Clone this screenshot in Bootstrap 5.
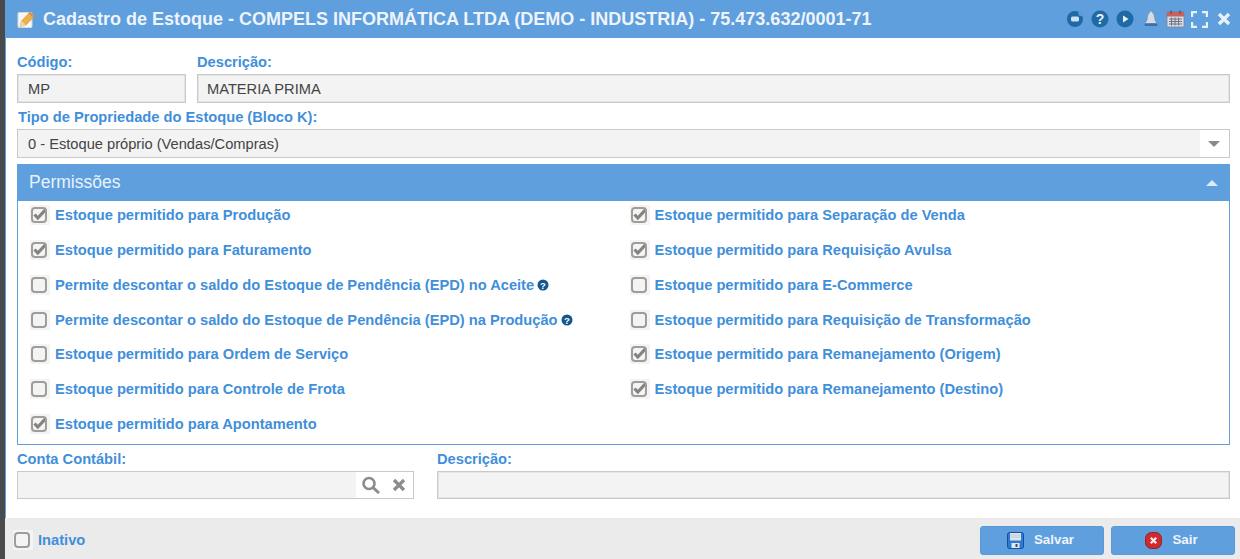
<!DOCTYPE html>
<html lang="pt-BR"><head><meta charset="utf-8"><title>Cadastro de Estoque</title>
<link href="https://cdn.jsdelivr.net/npm/bootstrap@5.3.0/dist/css/bootstrap.min.css" rel="stylesheet">
<style>
html,body{height:559px;overflow:hidden;margin:0}
body{font-family:"Liberation Sans",Arial,sans-serif;font-size:14.67px;background:#4a4a4a;color:#444}
.shell{height:559px;margin-left:5px;background:#fff;border-left:1px solid #5f9fde}
.titlebar{height:38px;background:#5f9fde;color:#eef4fb;margin-left:-1px;padding:0 9px 0 12px}
.titletext{font-size:18px;font-weight:700;margin-left:7px;white-space:nowrap}
.tools{gap:6px}
.ml1{margin-left:1px}.ml2{margin-left:2px}.ml3{margin-left:3px}
.formarea{height:480px;padding:0 10px 0 11px}
.lbl{display:block;font-weight:700;color:#3f8fdb;font-size:14.67px;line-height:16px;margin:0 0 4px}
.fld{height:29px;border:1px solid #c9c9c9;border-radius:0;background:#f3f3f3;color:#444;font-size:14.67px;padding:0 10px;box-shadow:inset 0 0 0 1px #e4e4e4;line-height:26px}
.fld:focus{background:#f3f3f3;border-color:#c9c9c9;box-shadow:inset 0 0 0 1px #e4e4e4}
.fld-d{padding-left:9px}
.top1{padding-top:16px;gap:11px}
.w-cod{width:169px}
.tipo{margin-top:6px}
.tipo .lbl{padding-left:1px}
.sel{height:29px;border:1px solid #c9c9c9;background:#fff}
.sel>span{background:#f3f3f3;width:1182px;height:100%;line-height:28px;padding-left:10px;color:#444}
.sel>i{flex:1}
.arrow-d{width:0;height:0;border-left:6px solid transparent;border-right:6px solid transparent;border-top:6px solid #8a8a8a;margin-right:9px}
.arrow-u{width:0;height:0;border-left:6px solid transparent;border-right:6px solid transparent;border-bottom:6px solid #dcebf9}
.perm{margin-top:6px;border:1px solid #5f9fde;border-top:0;height:281px}
.permhead{height:37px;background:#5f9fde;color:#e9f2fb;font-size:17.5px;margin:0 -1px;padding:0 12px 0 12px}
.permgrid{padding-left:12px}
.permcol{width:600px}
.chk{height:28px;margin-bottom:6.85px;gap:5px}
.chk label{font-weight:700;color:#3f8fdb;font-size:14.67px;white-space:nowrap}
.boxwrap{width:20px;height:20px;background:#f4f4f4;display:flex;align-items:center;padding-left:1px;flex:none}
.boxwrap .form-check-input{width:16px;height:16px;margin:0;border:2px solid #a09c98;border-radius:4px;background-color:#f4f4f4;box-shadow:none}
.boxwrap .form-check-input:checked{background-color:#f4f4f4;border-color:#a09c98;background-origin:border-box;background-size:16px 16px;background-image:url("data:image/svg+xml,%3Csvg xmlns='http://www.w3.org/2000/svg' viewBox='0 0 16 16'%3E%3Cpath d='M3.500 7.500l3.300 3.500L15 2.200' fill='none' stroke='%23838383' stroke-width='3.200'/%3E%3C/svg%3E")}
.qm{margin-left:-2px}
.bottom{margin-top:6px;gap:23px}
.w-cc{width:397px}
.lookup{height:28px;border:1px solid #c9c9c9;background:#fff}
.lookup>span{background:#f3f3f3;flex:1;height:100%}
.lookup>div{width:57px;padding:0 7px 0 5px}
.fld2{height:28px}
.footbar{height:41px;background:#ebebeb;margin-left:-1px;padding:3px 5px 0 8px}
.inativo{gap:5px}
.inativo label{font-weight:700;color:#3f8fdb;font-size:14.67px}
.acts{gap:7px}
.actbtn{width:124px;height:29px;background:#5f9fde;border:1px solid #5a99d8;border-radius:3px;color:#eef4fb;font-size:13.33px;font-weight:700;padding:0 3px 0 0;gap:10px;--bs-btn-hover-bg:#5f9fde}
</style></head><body>
<div class="shell d-flex flex-column">
 <div class="titlebar d-flex align-items-center justify-content-between">
  <div class="d-flex align-items-center">
   <svg width="19" height="19" viewBox="0 0 19 19" aria-hidden="true"><rect x="1" y="2.500" width="14" height="15" rx="1" fill="#f8f8f6" stroke="#d4d8db"/><path d="M3 16.500L4.500 11 13 2l4.500 4L9 15z" fill="#edb14a" stroke="#c9913a" stroke-width=".6"/><path d="M3 16.500L4.500 11 9 15z" fill="#ecd9b2"/><path d="M13 2l4.500 4-1.500 1.500-4.500-4z" fill="#d98a5e"/></svg>
   <span class="titletext">Cadastro de Estoque - COMPELS INFORMÁTICA LTDA (DEMO - INDUSTRIA) - 75.473.632/0001-71</span>
  </div>
  <div class="tools d-flex align-items-center">
   <svg width="18" height="18" viewBox="0 0 18 18" aria-hidden="true"><circle cx="9" cy="9" r="8" fill="#1f6aa5"/><rect x="5" y="6.500" width="8" height="5" rx="1.500" fill="#cfe2f3"/><path d="M12 1.500a8 8 0 0 1 5 5l-4-1z" fill="#5f9fde"/></svg>
   <svg class="ml1" width="18" height="18" viewBox="0 0 18 18" aria-hidden="true"><circle cx="9" cy="9" r="8.500" fill="#1f6aa5"/><text x="9" y="14" text-anchor="middle" font-family="Liberation Sans" font-weight="700" font-size="14" fill="#e8f1fa">?</text></svg>
   <svg class="ml1" width="18" height="18" viewBox="0 0 18 18" aria-hidden="true"><circle cx="9" cy="9" r="8.500" fill="#1f6aa5"/><path d="M7 5.500l5.500 3.500L7 12.500z" fill="#e8f1fa"/></svg>
   <svg class="ml2" width="18" height="18" viewBox="0 0 18 18" aria-hidden="true"><path d="M9 1c1 0 1.200.8 1.200 1.500C12.500 3.500 12.500 7 13 10c.3 1.500 2 2.500 2 3.500H3c0-1 1.700-2 2-3.500.5-3 .5-6.500 2.800-7.500C7.800 1.800 8 1 9 1z" fill="#d4dde6" stroke="#7d8a99" stroke-width=".7"/><rect x="2.500" y="13.500" width="13" height="2.500" rx="1" fill="#3f6fa8"/></svg>
   <svg width="19" height="18" viewBox="0 0 19 18" aria-hidden="true"><rect x="1" y="2" width="17" height="15" fill="#d9dde3" stroke="#7b7f8a" stroke-width=".8"/><rect x="1" y="2" width="17" height="4.500" fill="#c8605c"/><path d="M3 9h13M3 11.500h13M3 14h13M5.500 7.500v8M9 7.500v8M12.500 7.500v8" stroke="#6d7280" stroke-width="1"/><path d="M5 .5v3M14 .5v3" stroke="#555" stroke-width="1.300"/></svg>
   <svg width="17" height="17" viewBox="0 0 17 17" aria-hidden="true"><path d="M1 6V1h5M11 1h5v5M16 11v5h-5M6 16H1v-5" fill="none" stroke="#e8f1fa" stroke-width="2.400"/></svg>
   <svg class="ml3" width="14" height="14" viewBox="0 0 14 14" aria-hidden="true"><path d="M2 2l10 10M12 2L2 12" stroke="#e8f1fa" stroke-width="3.400"/></svg>
  </div>
 </div>
 <div class="formarea">
  <div class="d-flex top1">
   <div class="w-cod"><label class="lbl">Código:</label><input class="form-control fld" readonly value="MP"></div>
   <div class="flex-grow-1"><label class="lbl">Descrição:</label><input class="form-control fld fld-d" readonly value="MATERIA PRIMA"></div>
  </div>
  <div class="tipo"><label class="lbl">Tipo de Propriedade do Estoque (Bloco K):</label>
   <div class="sel d-flex align-items-center"><span>0 - Estoque próprio (Vendas/Compras)</span><i></i><div class="arrow-d"></div></div>
  </div>
  <div class="perm">
   <div class="permhead d-flex align-items-center justify-content-between"><span>Permissões</span><div class="arrow-u"></div></div>
   <div class="permgrid d-flex">
    <div class="permcol">
     <div class="chk d-flex align-items-center"><span class="boxwrap"><input class="form-check-input" type="checkbox" checked></span><label>Estoque permitido para Produção</label></div>
     <div class="chk d-flex align-items-center"><span class="boxwrap"><input class="form-check-input" type="checkbox" checked></span><label>Estoque permitido para Faturamento</label></div>
     <div class="chk d-flex align-items-center"><span class="boxwrap"><input class="form-check-input" type="checkbox"></span><label>Permite descontar o saldo do Estoque de Pendência (EPD) no Aceite</label>
      <svg class="qm" width="12" height="12" viewBox="0 0 12 12" aria-hidden="true"><circle cx="6" cy="6" r="5.500" fill="#12588f"/><text x="6" y="9.500" text-anchor="middle" font-family="Liberation Sans" font-weight="700" font-size="9.500" fill="#fff">?</text></svg></div>
     <div class="chk d-flex align-items-center"><span class="boxwrap"><input class="form-check-input" type="checkbox"></span><label>Permite descontar o saldo do Estoque de Pendência (EPD) na Produção</label>
      <svg class="qm" width="12" height="12" viewBox="0 0 12 12" aria-hidden="true"><circle cx="6" cy="6" r="5.500" fill="#12588f"/><text x="6" y="9.500" text-anchor="middle" font-family="Liberation Sans" font-weight="700" font-size="9.500" fill="#fff">?</text></svg></div>
     <div class="chk d-flex align-items-center"><span class="boxwrap"><input class="form-check-input" type="checkbox"></span><label>Estoque permitido para Ordem de Serviço</label></div>
     <div class="chk d-flex align-items-center"><span class="boxwrap"><input class="form-check-input" type="checkbox"></span><label>Estoque permitido para Controle de Frota</label></div>
     <div class="chk d-flex align-items-center"><span class="boxwrap"><input class="form-check-input" type="checkbox" checked></span><label>Estoque permitido para Apontamento</label></div>
    </div>
    <div class="permcol">
     <div class="chk d-flex align-items-center"><span class="boxwrap"><input class="form-check-input" type="checkbox" checked></span><label>Estoque permitido para Separação de Venda</label></div>
     <div class="chk d-flex align-items-center"><span class="boxwrap"><input class="form-check-input" type="checkbox" checked></span><label>Estoque permitido para Requisição Avulsa</label></div>
     <div class="chk d-flex align-items-center"><span class="boxwrap"><input class="form-check-input" type="checkbox"></span><label>Estoque permitido para E-Commerce</label></div>
     <div class="chk d-flex align-items-center"><span class="boxwrap"><input class="form-check-input" type="checkbox"></span><label>Estoque permitido para Requisição de Transformação</label></div>
     <div class="chk d-flex align-items-center"><span class="boxwrap"><input class="form-check-input" type="checkbox" checked></span><label>Estoque permitido para Remanejamento (Origem)</label></div>
     <div class="chk d-flex align-items-center"><span class="boxwrap"><input class="form-check-input" type="checkbox" checked></span><label>Estoque permitido para Remanejamento (Destino)</label></div>
    </div>
   </div>
  </div>
  <div class="d-flex bottom">
   <div class="w-cc"><label class="lbl">Conta Contábil:</label>
    <div class="lookup d-flex align-items-center"><span></span>
     <div class="d-flex align-items-center justify-content-between">
      <svg width="20" height="18" viewBox="0 0 20 18" aria-hidden="true"><circle cx="8" cy="7.500" r="5.500" fill="none" stroke="#8c8c8c" stroke-width="2.600"/><path d="M12 11.500l6 5.500" stroke="#8c8c8c" stroke-width="3"/></svg>
      <svg width="14" height="14" viewBox="0 0 14 14" aria-hidden="true"><path d="M2 2l10 10M12 2L2 12" stroke="#8c8c8c" stroke-width="3.200"/></svg>
     </div></div></div>
   <div class="flex-grow-1"><label class="lbl">Descrição:</label><input class="form-control fld fld2" readonly></div>
  </div>
 </div>
 <div class="footbar d-flex align-items-center justify-content-between">
  <div class="inativo d-flex align-items-center"><span class="boxwrap"><input class="form-check-input" type="checkbox"></span><label>Inativo</label></div>
  <div class="acts d-flex">
   <button class="btn actbtn d-flex align-items-center justify-content-center" type="button">
    <svg width="17" height="17" viewBox="0 0 17 17" aria-hidden="true"><rect x=".5" y=".5" width="16" height="16" rx="2" fill="#2a7ad6" stroke="#174f9d"/><rect x="3" y="1" width="11" height="7.500" fill="#dfe5ec"/><path d="M3 3h11M3 5h11" stroke="#b9c4d0" stroke-width=".8"/><rect x="4.500" y="11" width="8" height="5" fill="#e6eaee"/><rect x="8.500" y="12" width="2" height="3" fill="#3a4a60"/></svg>
    <span>Salvar</span></button>
   <button class="btn actbtn d-flex align-items-center justify-content-center" type="button">
    <svg width="17" height="17" viewBox="0 0 17 17" aria-hidden="true"><rect x=".5" y=".5" width="16" height="16" rx="6" fill="#cf2b2e" stroke="#96201f"/><path d="M5.800 5.800l5.400 5.400M11.200 5.800l-5.400 5.400" stroke="#fbe9e9" stroke-width="2.300"/></svg>
    <span>Sair</span></button>
  </div>
 </div>
</div>
</body></html>
